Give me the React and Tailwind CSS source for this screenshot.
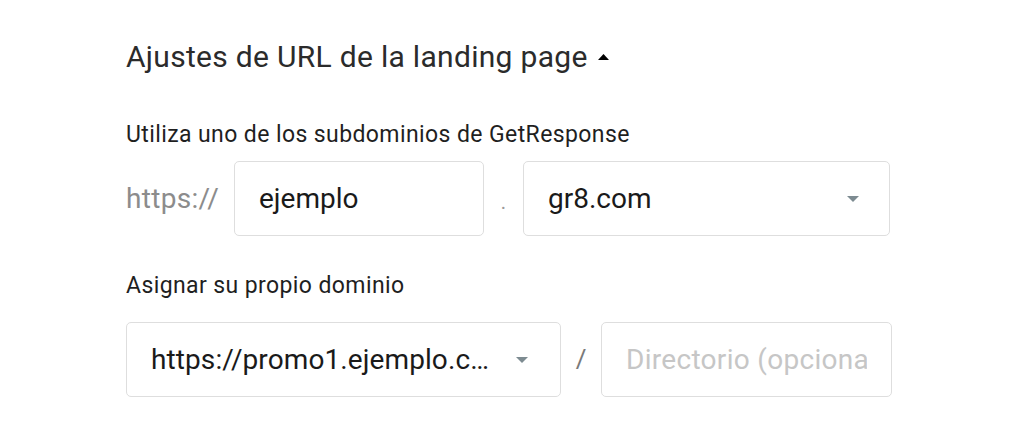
import React from 'react';

const Caret = ({ className }) => (
  <svg width="12" height="6" viewBox="0 0 12 6" className={className}>
    <path d="M0 0h12L6 6z" fill="currentColor" />
  </svg>
);

const App = () => {
  return (
    <div className="w-[1024px] h-[425px] bg-white font-['Roboto',sans-serif] overflow-hidden">
      <div className="pl-[126px] pt-[36px]">
        <h2 className="flex items-center text-[30px] leading-[42px] text-[#2b2b2b] tracking-[0.3px]">
          Ajustes de URL de la landing page
          <svg width="11" height="6" viewBox="0 0 11 6" className="ml-[10px] text-black">
            <path d="M5.5 0L11 6H0z" fill="currentColor" />
          </svg>
        </h2>

        <p className="mt-[42px] text-[23px] leading-[30px] text-[#1f1f1f] tracking-[0.4px]">
          Utiliza uno de los subdominios de GetResponse
        </p>

        <div className="mt-[11px] flex items-center h-[75px]">
          <span className="w-[108px] text-[28px] tracking-[0.3px] text-[#8c8c8c]">https://</span>
          <div className="w-[250px] h-full border border-[#dedede] rounded-[5px] flex items-center px-[24px] text-[28px] text-[#1a1a1a]">
            ejemplo
          </div>
          <span className="w-[39px] text-center text-[20px] text-[#9a9a9a] pt-[6px]">.</span>
          <div className="w-[367px] h-full border border-[#dedede] rounded-[5px] flex items-center justify-between pl-[24px] pr-[30px] text-[28px] text-[#1a1a1a]">
            gr8.com
            <Caret className="text-[#7d8b91]" />
          </div>
        </div>

        <p className="mt-[35px] text-[23px] leading-[30px] text-[#1f1f1f] tracking-[0.4px]">
          Asignar su propio dominio
        </p>

        <div className="mt-[21px] flex items-center h-[75px]">
          <div className="w-[435px] h-full border border-[#dedede] rounded-[5px] flex items-center justify-between pl-[24px] pr-[32px] text-[28px] text-[#1a1a1a]">
            <span className="truncate tracking-[0.1px]">https://promo1.ejemplo.c…</span>
            <Caret className="text-[#7d8b91] shrink-0" />
          </div>
          <span className="w-[40px] text-center text-[26px] text-[#7a7a7a]">/</span>
          <input
            placeholder="Directorio (opcional)"
            className="w-[291px] h-full border border-[#dedede] rounded-[5px] px-[24px] text-[28px] tracking-[0.3px] text-[#1a1a1a] placeholder:text-[#c6c6c6] outline-none"
          />
        </div>
      </div>
    </div>
  );
};

export default App;
